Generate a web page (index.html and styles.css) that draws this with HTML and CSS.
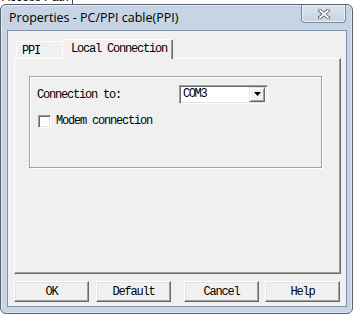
FILE: index.html
```html
<!DOCTYPE html>
<html lang="en">
  <head>
    <meta charset="UTF-8" />
    <meta name="viewport" content="width=device-width, initial-scale=1.0" />
    <link rel="stylesheet" href="styles.css">
  </head>
  <body>
    <div class="behind">
      <span class="behind-text">Access Path :</span>
      <span class="behind-edge"></span>
    </div>

    <div class="window">
      <!-- Title bar -->
      <div class="titlebar">
        <span class="title">Properties - PC/PPI cable(PPI)</span>
        <div class="close">
          <svg width="12" height="10" viewBox="0 0 12 10" xmlns="http://www.w3.org/2000/svg">
            <path d="M2 1.5 L10 8.5 M10 1.5 L2 8.5" stroke="#5a6270" stroke-width="3.6" stroke-linecap="square" fill="none" />
            <path d="M2 1.5 L10 8.5 M10 1.5 L2 8.5" stroke="#ffffff" stroke-width="1.8" stroke-linecap="square" fill="none" />
          </svg>
        </div>
      </div>

      <div class="client">
        <!-- Tabs -->
        <div class="tabs">
          <div class="tab">PPI</div>
          <div class="tab active">Local Connection</div>
        </div>

        <div class="panel">
          <div class="group">
            <div class="row">
              <span class="label">Connection to:</span>
              <div class="combo">
                <span class="combo-value">COM3</span>
                <span class="drop">
                  <svg width="7" height="4" viewBox="0 0 7 4" xmlns="http://www.w3.org/2000/svg">
                    <path d="M0 0 H7 L3.5 4 Z" fill="#000" />
                  </svg>
                </span>
              </div>
            </div>
            <div class="row check-row">
              <span class="check"></span>
              <span>Modem connection</span>
            </div>
          </div>
        </div>

        <!-- Bottom buttons -->
        <div class="buttons">
          <div class="btn btn-ok">OK</div>
          <div class="btn btn-default">Default</div>
          <div class="btn btn-cancel">Cancel</div>
          <div class="btn btn-help">Help</div>
        </div>
      </div>
    </div>
  </body>
</html>
```

FILE: styles.css
```css
body {
  margin: 0;
  background-color: #ffffff;
  overflow: hidden;
  width: 353px;
  height: 314px;
  font-family: "Liberation Mono", monospace;
  font-size: 12px;
  color: #000;
}

.behind {
  height: 4px;
  overflow: hidden;
  display: flex;
  align-items: flex-start;
}

.behind-text {
  display: block;
  margin-top: -9px;
  margin-left: 2px;
  width: 70px;
  line-height: 12px;
  font-family: "Liberation Sans", sans-serif;
  font-size: 12px;
}

.behind-edge {
  width: 1px;
  height: 4px;
  background-color: #444;
}

.window {
  box-sizing: border-box;
  height: 310px;
  border: 1px solid #59636f;
  border-radius: 6px 6px 6px 6px;
  background-color: #c6d4e3;
  box-shadow: inset 1px 1px #e4ecf5, inset -1px -1px #dbe4ef;
  padding: 0 5px 0 6px;
  display: flex;
  flex-direction: column;
}

.titlebar {
  height: 25px;
  display: flex;
  align-items: flex-start;
  justify-content: space-between;
}

.title {
  margin-top: 5px;
  margin-left: 2px;
  font-family: "Open Sans", sans-serif;
  font-size: 12.5px;
  line-height: 16px;
  color: #000;
}

.close {
  width: 45px;
  height: 18px;
  box-sizing: border-box;
  margin-right: 1px;
  border: 1px solid #7c8696;
  border-top: none;
  border-radius: 0 0 4px 4px;
  background: linear-gradient(#dde5ee, #c9d3de);
  box-shadow: inset 0 0 0 1px #eef2f7;
  display: flex;
  align-items: center;
  justify-content: center;
}

.client {
  box-sizing: border-box;
  height: 277px;
  border: 1px solid #8293a8;
  background-color: #f0f0f0;
  padding: 8px 5px 0 6px;
  display: flex;
  flex-direction: column;
}

/* Tabs */
.tabs {
  height: 19px;
  display: flex;
  align-items: flex-end;
  padding-left: 2px;
}

.tab {
  box-sizing: border-box;
  height: 17px;
  padding: 3px 0 0 5px;
  width: 48px;
  border-top: 1px solid #ffffff;
  border-left: 1px solid #ffffff;
  border-right: 1px solid #696969;
  border-radius: 2px 2px 0 0;
  background-color: #f0f0f0;
  line-height: 12px;
  letter-spacing: -1.2px;
}

.tab.active {
  position: relative;
  z-index: 1;
  height: 20px;
  width: 111px;
  margin: 0 0 -1px -2px;
  padding: 3px 0 0 8px;
  box-shadow: inset -1px 0 #a0a0a0;
}

.panel {
  box-sizing: border-box;
  height: 216px;
  border-top: 1px solid #ffffff;
  border-left: 1px solid #ffffff;
  border-right: 1px solid #696969;
  border-bottom: 1px solid #696969;
  box-shadow: inset -1px -1px #a0a0a0;
  padding: 17px 0 0 14px;
}

.group {
  box-sizing: border-box;
  width: 293px;
  height: 92px;
  border: 1px solid #a0a0a0;
  box-shadow: inset 1px 1px #ffffff, 1px 1px #ffffff;
  padding: 8px 0 0 7px;
  letter-spacing: -1.2px;
}

.row {
  display: flex;
  align-items: center;
}

.label {
  width: 142px;
}

.combo {
  box-sizing: border-box;
  width: 89px;
  height: 19px;
  background-color: #ffffff;
  border-top: 1px solid #a0a0a0;
  border-left: 1px solid #a0a0a0;
  border-right: 1px solid #ffffff;
  border-bottom: 1px solid #ffffff;
  box-shadow: inset 1px 1px #696969, inset -1px -1px #e3e3e3;
  padding: 2px 2px 2px 3px;
  display: flex;
  align-items: center;
  justify-content: space-between;
}

.combo-value {
  line-height: 13px;
  letter-spacing: -1.4px;
}

.drop {
  box-sizing: border-box;
  width: 16px;
  height: 15px;
  margin-top: -1px;
  background-color: #f0f0f0;
  border-top: 1px solid #e3e3e3;
  border-left: 1px solid #e3e3e3;
  border-right: 1px solid #696969;
  border-bottom: 1px solid #696969;
  box-shadow: inset 1px 1px #ffffff, inset -1px -1px #a0a0a0;
  display: flex;
  align-items: center;
  justify-content: center;
}

.check-row {
  margin-top: 10px;
}

.check {
  box-sizing: border-box;
  width: 13px;
  height: 13px;
  margin: 0 5px 0 1px;
  background-color: #ffffff;
  border-top: 1px solid #a0a0a0;
  border-left: 1px solid #a0a0a0;
  border-right: 1px solid #ffffff;
  border-bottom: 1px solid #ffffff;
  box-shadow: inset 1px 1px #696969, inset -1px -1px #e3e3e3;
}

/* Buttons */
.buttons {
  display: flex;
  margin-top: 7px;
  letter-spacing: -1.2px;
}

.btn {
  box-sizing: border-box;
  width: 75px;
  height: 21px;
  border-top: 1px solid #ffffff;
  border-left: 1px solid #ffffff;
  border-right: 1px solid #696969;
  border-bottom: 1px solid #696969;
  box-shadow: inset -1px -1px #a0a0a0, inset 1px 1px #e3e3e3;
  display: flex;
  align-items: center;
  justify-content: center;
}

.btn-default {
  margin-left: 7px;
}

.btn-cancel {
  margin-left: 13px;
}

.btn-help {
  margin-left: 6px;
}
```
